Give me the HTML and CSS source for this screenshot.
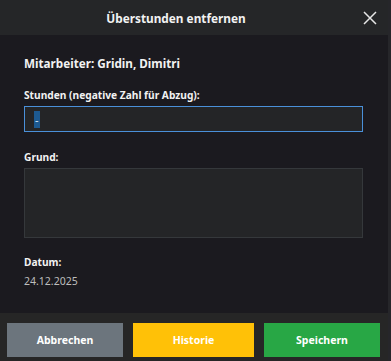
FILE: index.html
```html
<!DOCTYPE html>
<html lang="de">
<head>
    <meta charset="UTF-8">
    <meta name="viewport" content="width=device-width, initial-scale=1.0">
    <title>Überstunden entfernen</title>
    <link rel="stylesheet" href="styles.css">
</head>
<body>

    <div class="modal">
        <div class="modal-header">
            <h3 class="modal-title">Überstunden entfernen</h3>
            <button class="close-btn" aria-label="Schließen">
                <svg width="14" height="14" viewBox="0 0 14 14">
                    <path d="M1 1 L13 13 M13 1 L1 13" stroke="#e6e6e6" stroke-width="1.5" fill="none"/>
                </svg>
            </button>
        </div>

        <div class="modal-body">
            <p class="employee">Mitarbeiter: Gridin, Dimitri</p>

            <label for="hours">Stunden (negative Zahl für Abzug):</label>
            <div class="input-field focused" id="hours"><span class="selected">-</span></div>

            <label for="reason">Grund:</label>
            <div class="textarea-field" id="reason"></div>

            <label class="date-label">Datum:</label>
            <div class="date-value">24.12.2025</div>
        </div>

        <div class="modal-footer">
            <button class="btn btn-cancel">Abbrechen</button>
            <button class="btn btn-history">Historie</button>
            <button class="btn btn-save">Speichern</button>
        </div>
    </div>

</body>
</html>
```

FILE: styles.css
```css
body, html {
    margin: 0;
    padding: 0;
    width: 100%;
    height: 100%;
    background: #26262a;
    font-family: 'Noto Sans', 'Open Sans', sans-serif;
    overflow: hidden;
}
.modal {
    width: 388px;
    height: 361px;
    background-color: #1b1a1f;
    display: flex;
    flex-direction: column;
}
.modal-header {
    height: 35px;
    background-color: #252628;
    display: flex;
    align-items: center;
}
.modal-title {
    flex: 1;
    margin: 0;
    text-align: center;
    font-size: 11.8px;
    font-weight: 700;
    color: #f2f2f2;
}
.close-btn {
    width: 36px;
    height: 35px;
    padding: 0;
    border: none;
    background: none;
    display: flex;
    align-items: center;
    justify-content: center;
    cursor: pointer;
}
.modal-body {
    flex: 1;
    padding: 19px 25px 0 24px;
}
.employee {
    margin: 0 0 15px 0;
    font-size: 11.7px;
    font-weight: 700;
    line-height: 18px;
    color: #f2f2f2;
}
.modal-body label {
    display: block;
    font-size: 10.2px;
    font-weight: 700;
    line-height: 16px;
    color: #f2f2f2;
    margin-bottom: 3px;
}
.input-field {
    height: 24px;
    border: 1px solid #3a3d40;
    background-color: #242527;
    display: flex;
    align-items: center;
    padding-left: 9px;
    margin-bottom: 17px;
}
.input-field.focused {
    border-color: #4a90d9;
}
.selected {
    background-color: #1d5a91;
    color: #cfe3f5;
    font-size: 11px;
    line-height: 17px;
    padding: 0 1px;
}
.textarea-field {
    height: 68px;
    border: 1px solid #35383b;
    background-color: #242527;
    margin-bottom: 16px;
}
.date-label {
    margin-bottom: 2px;
}
.date-value {
    font-size: 10.5px;
    line-height: 16px;
    color: #bdbdbd;
}
.modal-footer {
    height: 48px;
    background-color: #262626;
    display: flex;
    align-items: flex-start;
    gap: 10px;
    padding: 10px 8px 0 7px;
    box-sizing: border-box;
}
.btn {
    height: 34px;
    border: none;
    font-family: inherit;
    font-size: 10.5px;
    font-weight: 700;
    color: #fff;
    cursor: pointer;
}
.btn-cancel {
    width: 116px;
    background-color: #6c757d;
}
.btn-history {
    width: 121px;
    background-color: #ffc107;
}
.btn-save {
    width: 116px;
    background-color: #28a745;
}
```
